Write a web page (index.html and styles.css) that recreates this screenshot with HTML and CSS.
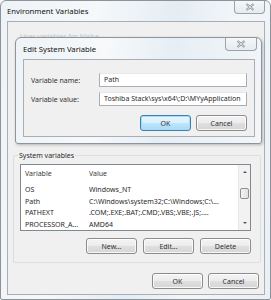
FILE: index.html
```html
<!DOCTYPE html>
<html>
<head>
<meta charset="utf-8">
<link rel="stylesheet" href="styles.css">
</head>
<body>
<div class="win">
  <div class="titlebar">
    <span class="title">Environment Variables</span>
    <span class="close">
      <svg width="10" height="8" viewBox="0 0 10 8"><path d="M1.5 1 L8.5 7 M8.5 1 L1.5 7" stroke="#8a8f96" stroke-width="2.2"/><path d="M1.5 1 L8.5 7 M8.5 1 L1.5 7" stroke="#f4f6f8" stroke-width="0.8"/></svg>
    </span>
  </div>
  <div class="client">
    <div class="user-label">User variables for Nisha</div>
    <fieldset class="group">
      <legend>System variables</legend>
      <div class="list">
        <div class="rows">
          <div class="row head"><span class="c1">Variable</span><span class="c2">Value</span></div>
          <div class="row"><span class="c1">OS</span><span class="c2">Windows_NT</span></div>
          <div class="row"><span class="c1">Path</span><span class="c2">C:\Windows\system32;C:\Windows;C:\...</span></div>
          <div class="row"><span class="c1">PATHEXT</span><span class="c2">.COM;.EXE;.BAT;.CMD;.VBS;.VBE;.JS;....</span></div>
          <div class="row"><span class="c1">PROCESSOR_A...</span><span class="c2">AMD64</span></div>
        </div>
        <div class="scroll">
          <div class="arrow up"></div>
          <div class="track"><div class="thumb"></div></div>
          <div class="arrow down"></div>
        </div>
      </div>
      <div class="btnrow">
        <span class="btn">New...</span>
        <span class="btn">Edit...</span>
        <span class="btn">Delete</span>
      </div>
    </fieldset>
    <div class="footer">
      <span class="btn">OK</span>
      <span class="btn">Cancel</span>
    </div>
  </div>

  <div class="dialog">
    <div class="dtitlebar">
      <span class="dtitle">Edit System Variable</span>
      <span class="dclose">
        <svg width="10" height="8" viewBox="0 0 10 8"><path d="M1.5 1 L8.5 7 M8.5 1 L1.5 7" stroke="#8a8f96" stroke-width="2.2"/><path d="M1.5 1 L8.5 7 M8.5 1 L1.5 7" stroke="#f4f6f8" stroke-width="0.8"/></svg>
      </span>
    </div>
    <div class="dclient">
      <div class="field"><span class="lbl">Variable name:</span><span class="input">Path</span></div>
      <div class="field"><span class="lbl">Variable value:</span><span class="input value">Toshiba Stack\sys\x64\;D:\MYyApplication</span></div>
      <div class="dbtns">
        <span class="btn default">OK</span>
        <span class="btn">Cancel</span>
      </div>
    </div>
  </div>
</div>
</body>
</html>
```

FILE: styles.css
```css
* { box-sizing: border-box; }
html, body { margin: 0; padding: 0; }
body {
  width: 271px;
  height: 300px;
  overflow: hidden;
  background: #ffffff;
  font-family: "Noto Sans", "Open Sans", sans-serif;
  font-size: 7px;
  color: #2a2a2a;
}
.win {
  position: relative;
  width: 271px;
  height: 300px;
  border: 1px solid #8c939b;
  border-radius: 6px 6px 2px 2px;
  background: linear-gradient(100deg, #eef3f7 0%, #f6f8fa 30%, #e4edf4 55%, #f3f6f9 75%, #e9f0f5 100%);
  display: flex;
  flex-direction: column;
}
.titlebar {
  height: 20px;
  display: flex;
  align-items: flex-start;
  justify-content: space-between;
  padding: 0 5px 0 6px;
}
.title {
  margin-top: 5px;
  font-size: 7.7px;
  color: #111;
}
.close {
  width: 31px;
  height: 13px;
  border: 1px solid #9aa2ab;
  border-top: none;
  border-radius: 0 0 4px 4px;
  background: linear-gradient(#f5f7f9, #e6ebf0);
  display: flex;
  align-items: center;
  justify-content: center;
}
.client {
  margin: 0 5px 4px 6px;
  flex: 1;
  border: 1px solid #a7aeb6;
  background: #f0f0f0;
  display: flex;
  flex-direction: column;
  padding: 0 3px 0 5px;
}
.user-label {
  margin: 10px 0 0 7px;
  height: 10px;
  color: #c4c8cc;
}
.group {
  margin: 0;
  margin-top: 109px;
  padding: 0 9px 6px 6px;
  border: 1px solid #d5dfe5;
  border-radius: 2px;
  height: 112px;
  min-width: 0;
}
.group legend {
  padding: 0 1px;
  margin-left: -2px;
  color: #2a2a2a;
}
.list {
  margin-top: 4px;
  height: 67px;
  border: 1px solid #828790;
  background: #fff;
  display: flex;
}
.rows { flex: 1; min-width: 0; }
.row {
  height: 11.7px;
  line-height: 11.7px;
  display: flex;
  white-space: nowrap;
  overflow: hidden;
}
.row.head { height: 19px; line-height: 18px; color: #3a3a3a; }
.c1 { width: 68px; padding-left: 4px; flex: none; }
.c2 { flex: 1; overflow: hidden; }
.scroll {
  width: 12px;
  flex: none;
  display: flex;
  flex-direction: column;
  background: #f2f2f2;
  border-left: 1px solid #e8e8e8;
}
.arrow { height: 14px; position: relative; }
.arrow::after {
  content: "";
  position: absolute;
  left: 4px;
  border-left: 2px solid transparent;
  border-right: 2px solid transparent;
}
.arrow.up::after { top: 6px; border-bottom: 2px solid #555; }
.arrow.down::after { top: 6px; border-top: 2px solid #555; }
.track { flex: 1; padding-top: 9px; }
.thumb {
  height: 11px;
  margin: 0 1px;
  border: 1px solid #8e8f8f;
  border-radius: 2px;
  background: linear-gradient(90deg, #f3f3f3, #e2e2e2);
}
.btnrow {
  margin-top: 7px;
  display: flex;
  justify-content: flex-end;
  gap: 6px;
}
.btn {
  width: 51px;
  height: 16px;
  flex: none;
  border: 1px solid #8c8c8c;
  border-radius: 3px;
  background: linear-gradient(#f4f4f4 0%, #ececec 48%, #dfdfdf 52%, #d6d6d6 100%);
  box-shadow: inset 0 0 0 1px rgba(255,255,255,0.8);
  display: flex;
  align-items: center;
  justify-content: center;
  color: #333;
}
.footer {
  margin-top: 10px;
  display: flex;
  justify-content: flex-end;
  gap: 5px;
  padding-right: 2px;
}
.dialog {
  position: absolute;
  left: 14px;
  top: 36px;
  width: 247px;
  height: 107px;
  border: 1px solid #8c949c;
  border-radius: 6px 6px 3px 3px;
  background: linear-gradient(100deg, #eef3f7 0%, #f7f9fb 35%, #e6eef5 60%, #f3f6f9 100%);
  box-shadow: 1px 1px 3px rgba(0,0,0,0.25);
  display: flex;
  flex-direction: column;
}
.dtitlebar {
  height: 21px;
  display: flex;
  justify-content: space-between;
  align-items: flex-start;
  padding: 0 4px 0 7px;
}
.dtitle { margin-top: 6px; font-size: 7.7px; color: #111; }
.dclose {
  width: 32px;
  height: 13px;
  border: 1px solid #9aa2ab;
  border-top: none;
  border-radius: 0 0 4px 4px;
  background: linear-gradient(#f5f7f9, #e6ebf0);
  display: flex;
  align-items: center;
  justify-content: center;
}
.dclient {
  flex: 1;
  margin: 0 6px 6px 7px;
  border: 1px solid #a7aeb6;
  background: #f0f0f0;
  padding: 13px 7px 0 7px;
  display: flex;
  flex-direction: column;
  gap: 5px;
}
.field { display: flex; align-items: center; height: 14px; }
.lbl { width: 68px; flex: none; color: #333; }
.input {
  flex: 1;
  min-width: 0;
  height: 14px;
  border: 1px solid #abadb3;
  border-top-color: #e3e9ef;
  background: #fff;
  padding: 0 4px;
  line-height: 12px;
  white-space: nowrap;
  overflow: hidden;
}
.dbtns {
  margin-top: 4px;
  display: flex;
  justify-content: flex-end;
  gap: 5px;
}
.btn.default {
  border-color: #3c7fb1;
  box-shadow: inset 0 0 0 1px #a9dcf6;
  background: linear-gradient(#eaf6fd 0%, #d9f0fc 48%, #bee6fd 52%, #a7d9f5 100%);
}
```
